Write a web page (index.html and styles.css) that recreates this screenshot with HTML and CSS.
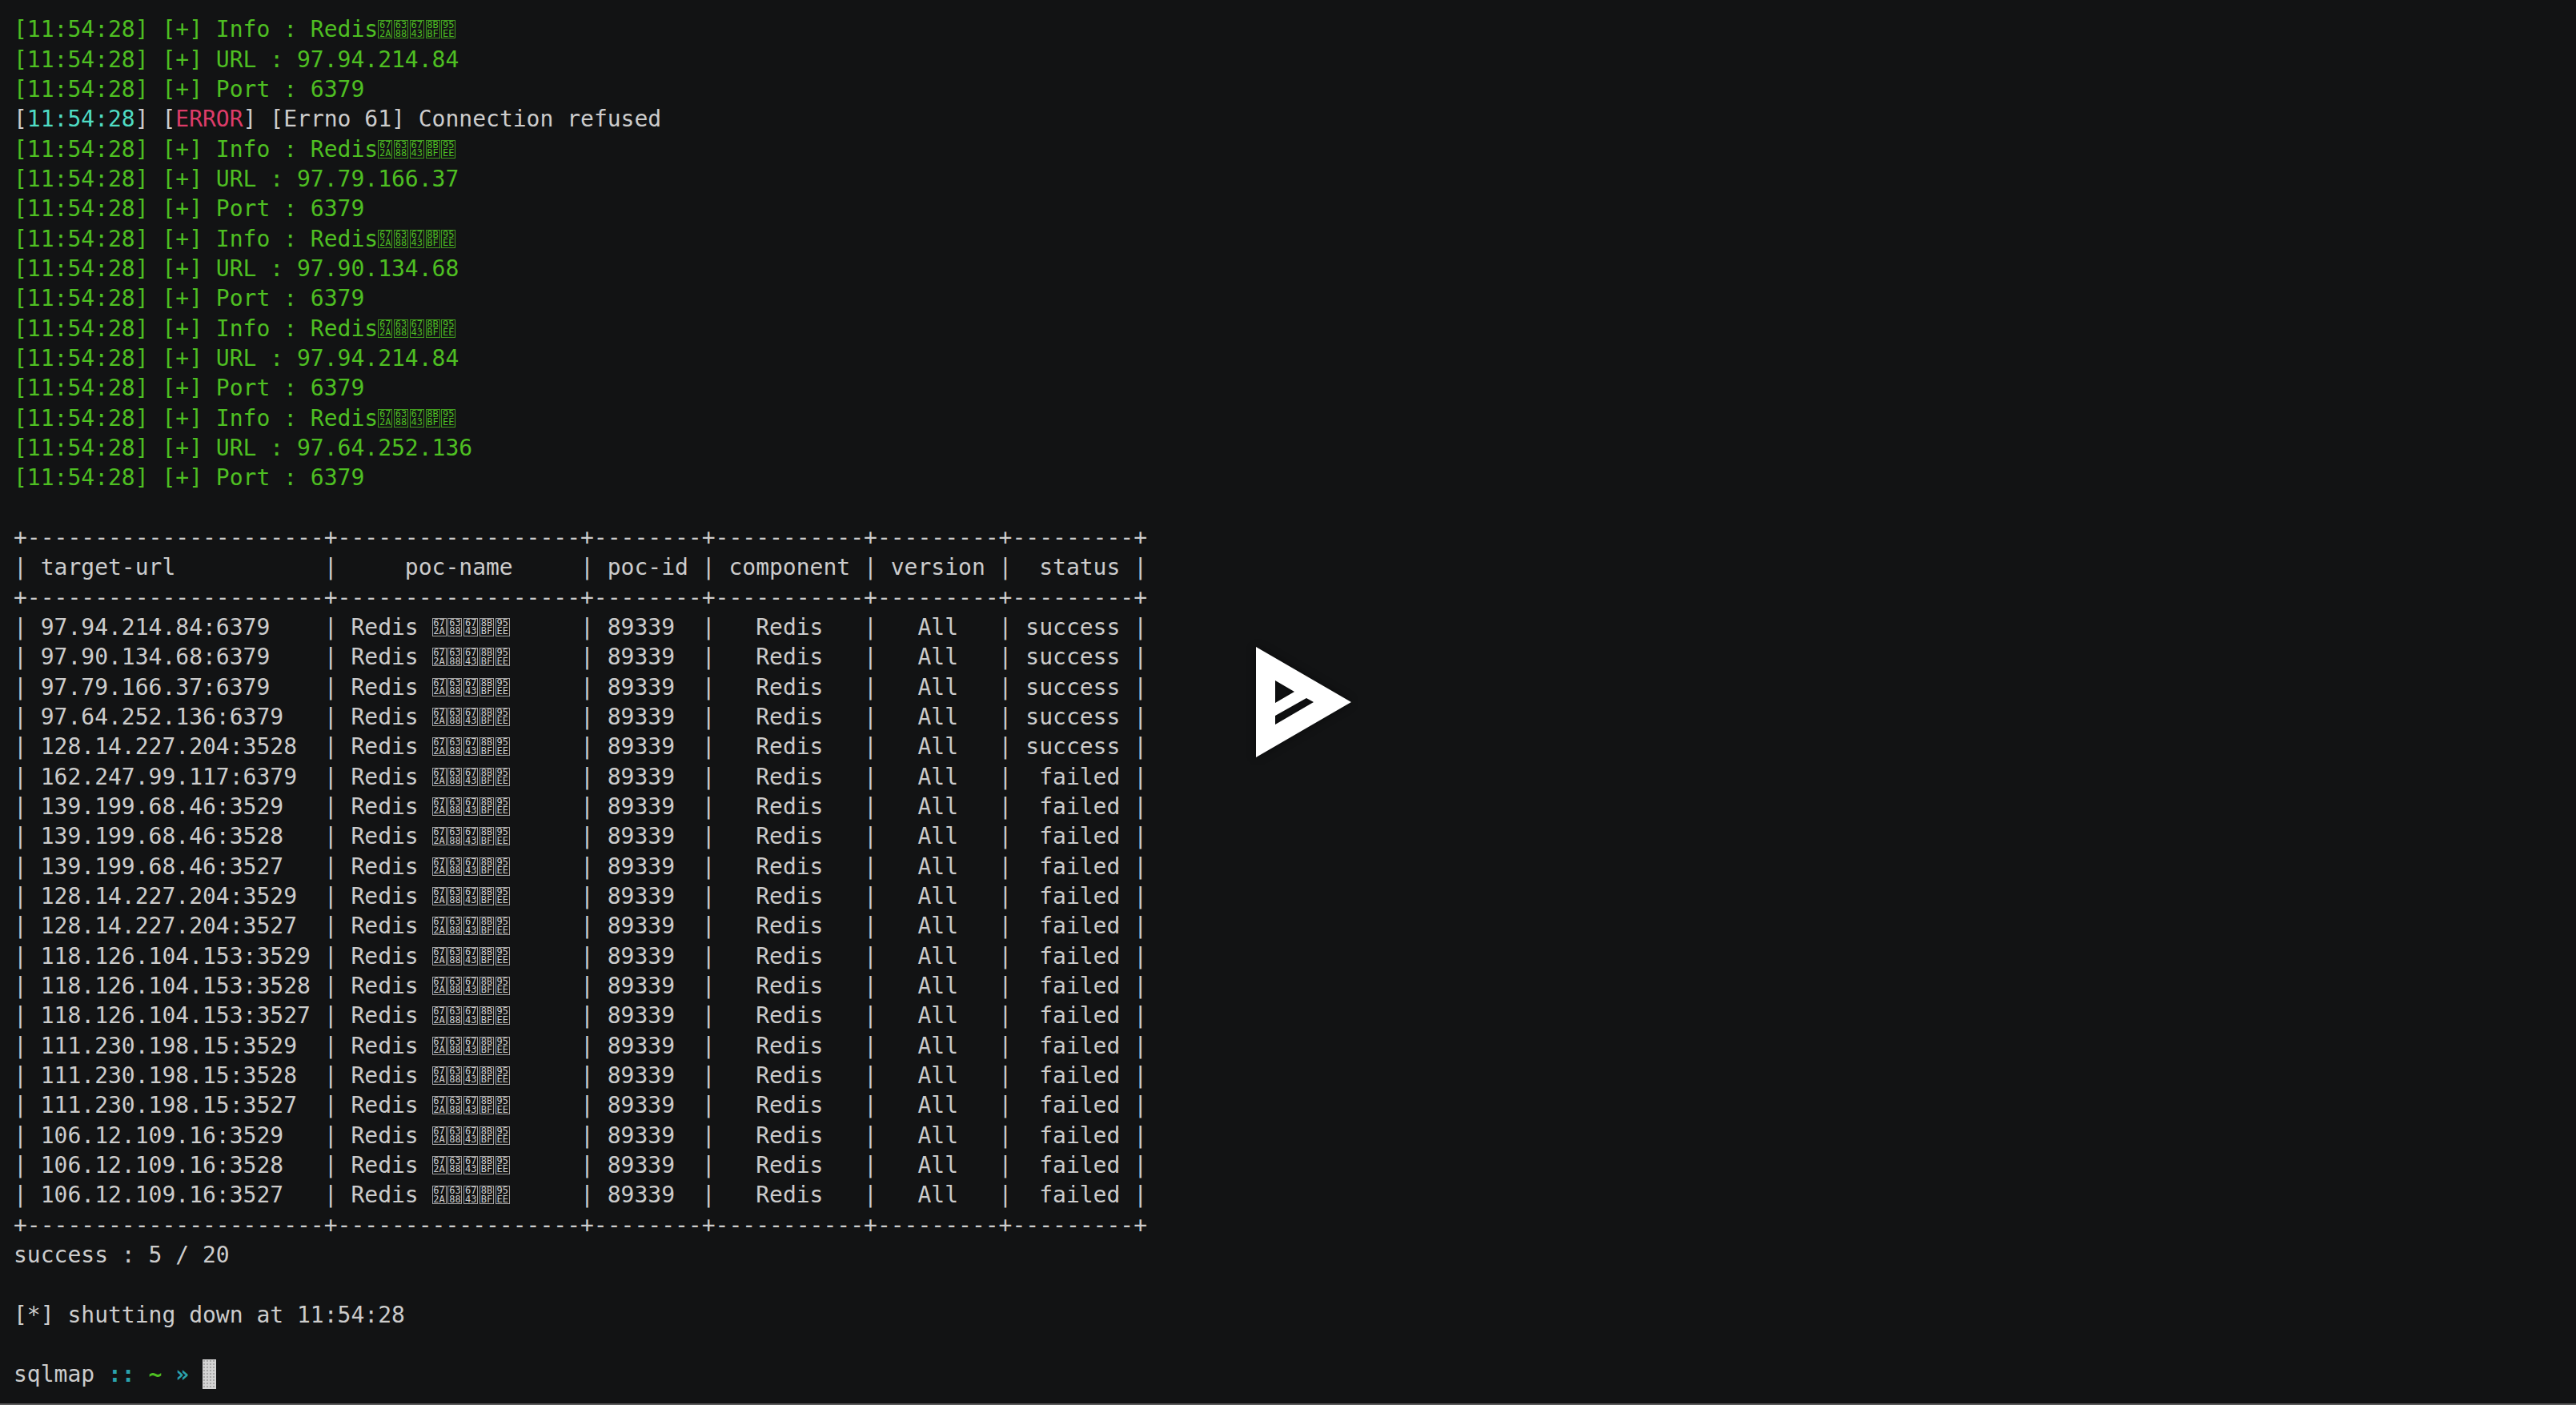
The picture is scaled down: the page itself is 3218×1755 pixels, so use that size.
FILE: index.html
```html
<!DOCTYPE html>
<html lang="en">
<head>
<meta charset="utf-8">
<title>asciinema</title>
<link rel="stylesheet" href="styles.css">
</head>
<body>
<main class="term">
<div class="l g">[11:54:28] [+] Info : Redis<span class="tf"><i>67<br>2A</i><i>63<br>88</i><i>67<br>43</i><i>8B<br>BF</i><i>95<br>EE</i></span></div>
<div class="l g">[11:54:28] [+] URL : 97.94.214.84</div>
<div class="l g">[11:54:28] [+] Port : 6379</div>
<div class="l">[<span class="c">11:54:28</span>] [<span class="r">ERROR</span>] [Errno 61] Connection refused</div>
<div class="l g">[11:54:28] [+] Info : Redis<span class="tf"><i>67<br>2A</i><i>63<br>88</i><i>67<br>43</i><i>8B<br>BF</i><i>95<br>EE</i></span></div>
<div class="l g">[11:54:28] [+] URL : 97.79.166.37</div>
<div class="l g">[11:54:28] [+] Port : 6379</div>
<div class="l g">[11:54:28] [+] Info : Redis<span class="tf"><i>67<br>2A</i><i>63<br>88</i><i>67<br>43</i><i>8B<br>BF</i><i>95<br>EE</i></span></div>
<div class="l g">[11:54:28] [+] URL : 97.90.134.68</div>
<div class="l g">[11:54:28] [+] Port : 6379</div>
<div class="l g">[11:54:28] [+] Info : Redis<span class="tf"><i>67<br>2A</i><i>63<br>88</i><i>67<br>43</i><i>8B<br>BF</i><i>95<br>EE</i></span></div>
<div class="l g">[11:54:28] [+] URL : 97.94.214.84</div>
<div class="l g">[11:54:28] [+] Port : 6379</div>
<div class="l g">[11:54:28] [+] Info : Redis<span class="tf"><i>67<br>2A</i><i>63<br>88</i><i>67<br>43</i><i>8B<br>BF</i><i>95<br>EE</i></span></div>
<div class="l g">[11:54:28] [+] URL : 97.64.252.136</div>
<div class="l g">[11:54:28] [+] Port : 6379</div>
<div class="l"> </div>
<div class="l">+----------------------+------------------+--------+-----------+---------+---------+</div>
<div class="l">| target-url           |     poc-name     | poc-id | component | version |  status |</div>
<div class="l">+----------------------+------------------+--------+-----------+---------+---------+</div>
<div class="l">| 97.94.214.84:6379    | Redis <span class="tf"><i>67<br>2A</i><i>63<br>88</i><i>67<br>43</i><i>8B<br>BF</i><i>95<br>EE</i></span>     | 89339  |   Redis   |   All   | success |</div>
<div class="l">| 97.90.134.68:6379    | Redis <span class="tf"><i>67<br>2A</i><i>63<br>88</i><i>67<br>43</i><i>8B<br>BF</i><i>95<br>EE</i></span>     | 89339  |   Redis   |   All   | success |</div>
<div class="l">| 97.79.166.37:6379    | Redis <span class="tf"><i>67<br>2A</i><i>63<br>88</i><i>67<br>43</i><i>8B<br>BF</i><i>95<br>EE</i></span>     | 89339  |   Redis   |   All   | success |</div>
<div class="l">| 97.64.252.136:6379   | Redis <span class="tf"><i>67<br>2A</i><i>63<br>88</i><i>67<br>43</i><i>8B<br>BF</i><i>95<br>EE</i></span>     | 89339  |   Redis   |   All   | success |</div>
<div class="l">| 128.14.227.204:3528  | Redis <span class="tf"><i>67<br>2A</i><i>63<br>88</i><i>67<br>43</i><i>8B<br>BF</i><i>95<br>EE</i></span>     | 89339  |   Redis   |   All   | success |</div>
<div class="l">| 162.247.99.117:6379  | Redis <span class="tf"><i>67<br>2A</i><i>63<br>88</i><i>67<br>43</i><i>8B<br>BF</i><i>95<br>EE</i></span>     | 89339  |   Redis   |   All   |  failed |</div>
<div class="l">| 139.199.68.46:3529   | Redis <span class="tf"><i>67<br>2A</i><i>63<br>88</i><i>67<br>43</i><i>8B<br>BF</i><i>95<br>EE</i></span>     | 89339  |   Redis   |   All   |  failed |</div>
<div class="l">| 139.199.68.46:3528   | Redis <span class="tf"><i>67<br>2A</i><i>63<br>88</i><i>67<br>43</i><i>8B<br>BF</i><i>95<br>EE</i></span>     | 89339  |   Redis   |   All   |  failed |</div>
<div class="l">| 139.199.68.46:3527   | Redis <span class="tf"><i>67<br>2A</i><i>63<br>88</i><i>67<br>43</i><i>8B<br>BF</i><i>95<br>EE</i></span>     | 89339  |   Redis   |   All   |  failed |</div>
<div class="l">| 128.14.227.204:3529  | Redis <span class="tf"><i>67<br>2A</i><i>63<br>88</i><i>67<br>43</i><i>8B<br>BF</i><i>95<br>EE</i></span>     | 89339  |   Redis   |   All   |  failed |</div>
<div class="l">| 128.14.227.204:3527  | Redis <span class="tf"><i>67<br>2A</i><i>63<br>88</i><i>67<br>43</i><i>8B<br>BF</i><i>95<br>EE</i></span>     | 89339  |   Redis   |   All   |  failed |</div>
<div class="l">| 118.126.104.153:3529 | Redis <span class="tf"><i>67<br>2A</i><i>63<br>88</i><i>67<br>43</i><i>8B<br>BF</i><i>95<br>EE</i></span>     | 89339  |   Redis   |   All   |  failed |</div>
<div class="l">| 118.126.104.153:3528 | Redis <span class="tf"><i>67<br>2A</i><i>63<br>88</i><i>67<br>43</i><i>8B<br>BF</i><i>95<br>EE</i></span>     | 89339  |   Redis   |   All   |  failed |</div>
<div class="l">| 118.126.104.153:3527 | Redis <span class="tf"><i>67<br>2A</i><i>63<br>88</i><i>67<br>43</i><i>8B<br>BF</i><i>95<br>EE</i></span>     | 89339  |   Redis   |   All   |  failed |</div>
<div class="l">| 111.230.198.15:3529  | Redis <span class="tf"><i>67<br>2A</i><i>63<br>88</i><i>67<br>43</i><i>8B<br>BF</i><i>95<br>EE</i></span>     | 89339  |   Redis   |   All   |  failed |</div>
<div class="l">| 111.230.198.15:3528  | Redis <span class="tf"><i>67<br>2A</i><i>63<br>88</i><i>67<br>43</i><i>8B<br>BF</i><i>95<br>EE</i></span>     | 89339  |   Redis   |   All   |  failed |</div>
<div class="l">| 111.230.198.15:3527  | Redis <span class="tf"><i>67<br>2A</i><i>63<br>88</i><i>67<br>43</i><i>8B<br>BF</i><i>95<br>EE</i></span>     | 89339  |   Redis   |   All   |  failed |</div>
<div class="l">| 106.12.109.16:3529   | Redis <span class="tf"><i>67<br>2A</i><i>63<br>88</i><i>67<br>43</i><i>8B<br>BF</i><i>95<br>EE</i></span>     | 89339  |   Redis   |   All   |  failed |</div>
<div class="l">| 106.12.109.16:3528   | Redis <span class="tf"><i>67<br>2A</i><i>63<br>88</i><i>67<br>43</i><i>8B<br>BF</i><i>95<br>EE</i></span>     | 89339  |   Redis   |   All   |  failed |</div>
<div class="l">| 106.12.109.16:3527   | Redis <span class="tf"><i>67<br>2A</i><i>63<br>88</i><i>67<br>43</i><i>8B<br>BF</i><i>95<br>EE</i></span>     | 89339  |   Redis   |   All   |  failed |</div>
<div class="l">+----------------------+------------------+--------+-----------+---------+---------+</div>
<div class="l">success : 5 / 20</div>
<div class="l"> </div>
<div class="l">[*] shutting down at 11:54:28</div>
<div class="l"> </div>
<div class="l">sqlmap <b class="t">::</b> <b class="g">~</b> <b class="t">»</b> <span class="cursor"> </span></div>
</main>
<svg class="play" viewBox="0 0 119 138" aria-hidden="true"><path fill-rule="evenodd" fill="#fff" d="M0 0L119 69L0 138ZM24 42V70L48 56ZM63 64L24 86V97L72 69Z"/></svg>
</body>
</html>
```
FILE: styles.css
```css
html, body {
  margin: 0;
  height: 100%;
  background: #121314;
}
body {
  position: relative;
  overflow: hidden;
  box-sizing: border-box;
  border-bottom: 2px solid #5a5a5a;
}
.term {
  padding: 18.4px 0 0 17px;
  font-family: "DejaVu Sans Mono", monospace;
  font-size: 28px;
  color: #cccccc;
}
.l {
  height: 37.33px;
  line-height: 37.33px;
  white-space: pre;
}
.g { color: #4ebf22; }
.c { color: #4fdcc4; }
.r { color: #dd3c69; }
.t { color: #2ba3ae; }
.tf {
  display: inline-flex;
  width: 6ch;
  height: 23px;
  margin-top: 7px;
  vertical-align: top;
}
.tf i {
  box-sizing: border-box;
  flex: 0 0 18px;
  height: 23px;
  margin-right: 1.8px;
  border: 1px solid color-mix(in srgb, currentColor 78%, transparent);
  font: normal 12px/10.5px "DejaVu Sans Mono", monospace;
  text-align: center;
  white-space: nowrap;
}
.cursor {
  display: inline-block;
  width: 1ch;
  height: 37px;
  vertical-align: top;
  background: radial-gradient(circle, #a8a8a8 0.7px, transparent 1px) 0 0 / 4px 4px, #d4d4d4;
}
.play {
  position: absolute;
  left: 1569px;
  top: 808px;
  width: 119px;
  height: 138px;
  filter: drop-shadow(0 0 6px rgba(0, 0, 0, 0.45));
}
```
